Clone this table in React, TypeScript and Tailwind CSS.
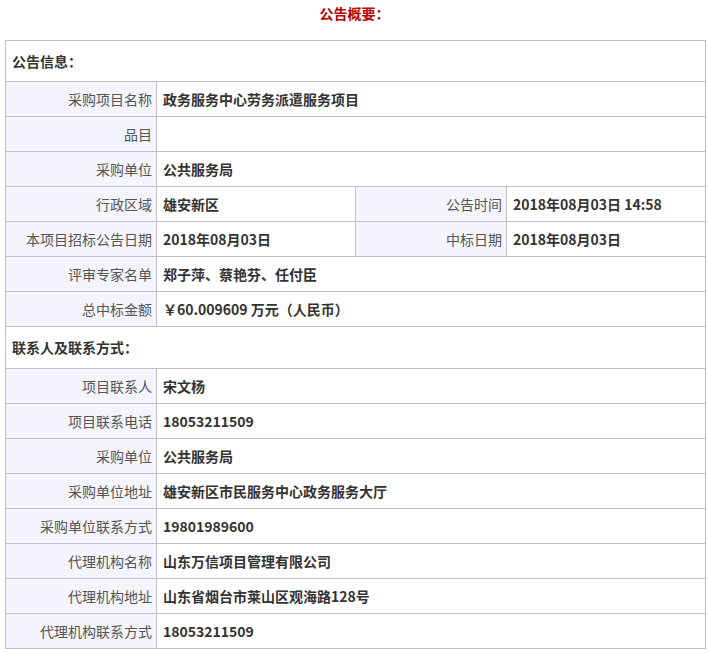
import React from "react";

const font = { fontFamily: '"Noto Sans CJK SC", "Noto Sans", sans-serif' };

type Row =
  | { kind: "header"; text: string; h: number }
  | { kind: "single"; label: string; value: string }
  | { kind: "double"; label: string; value: string; label2: string; value2: string };

const rows: Row[] = [
  { kind: "header", text: "公告信息：", h: 41 },
  { kind: "single", label: "采购项目名称", value: "政务服务中心劳务派遣服务项目" },
  { kind: "single", label: "品目", value: "" },
  { kind: "single", label: "采购单位", value: "公共服务局" },
  { kind: "double", label: "行政区域", value: "雄安新区", label2: "公告时间", value2: "2018年08月03日 14:58" },
  { kind: "double", label: "本项目招标公告日期", value: "2018年08月03日", label2: "中标日期", value2: "2018年08月03日" },
  { kind: "single", label: "评审专家名单", value: "郑子萍、蔡艳芬、任付臣" },
  { kind: "single", label: "总中标金额", value: "￥60.009609 万元（人民币）" },
  { kind: "header", text: "联系人及联系方式：", h: 42 },
  { kind: "single", label: "项目联系人", value: "宋文杨" },
  { kind: "single", label: "项目联系电话", value: "18053211509" },
  { kind: "single", label: "采购单位", value: "公共服务局" },
  { kind: "single", label: "采购单位地址", value: "雄安新区市民服务中心政务服务大厅" },
  { kind: "single", label: "采购单位联系方式", value: "19801989600" },
  { kind: "single", label: "代理机构名称", value: "山东万信项目管理有限公司" },
  { kind: "single", label: "代理机构地址", value: "山东省烟台市莱山区观海路128号" },
  { kind: "single", label: "代理机构联系方式", value: "18053211509" },
];

const labelCls =
  "border border-[#c0c0c0] bg-[#f3f4fc] text-right pr-[4px] text-[#555555] font-normal whitespace-nowrap";
const valueCls =
  "border border-[#c0c0c0] bg-white text-left pl-[6px] text-[#333333] font-bold whitespace-nowrap";

export default function App() {
  return (
    <div className="w-[709px] h-[653px] bg-white text-[14px]" style={font}>
      <div className="h-[40px] pt-[3px] text-center font-bold text-[#b40000] leading-[20px]">
        公告概要：
      </div>
      <table className="ml-[5px] w-[700px] table-fixed border-collapse">
        <colgroup>
          <col className="w-[151px]" />
          <col className="w-[199px]" />
          <col className="w-[151px]" />
          <col className="w-[199px]" />
        </colgroup>
        <tbody>
          {rows.map((r, i) => {
            if (r.kind === "header") {
              return (
                <tr key={i} style={{ height: r.h }}>
                  <td
                    colSpan={4}
                    className="border border-[#c0c0c0] pl-[6px] font-bold text-[#333333] text-left"
                  >
                    {r.text}
                  </td>
                </tr>
              );
            }
            if (r.kind === "single") {
              return (
                <tr key={i} className="h-[35px]">
                  <td className={labelCls}>{r.label}</td>
                  <td colSpan={3} className={valueCls}>
                    {r.value}
                  </td>
                </tr>
              );
            }
            return (
              <tr key={i} className="h-[35px]">
                <td className={labelCls}>{r.label}</td>
                <td className={valueCls}>{r.value}</td>
                <td className={labelCls}>{r.label2}</td>
                <td className={valueCls}>{r.value2}</td>
              </tr>
            );
          })}
        </tbody>
      </table>
    </div>
  );
}
